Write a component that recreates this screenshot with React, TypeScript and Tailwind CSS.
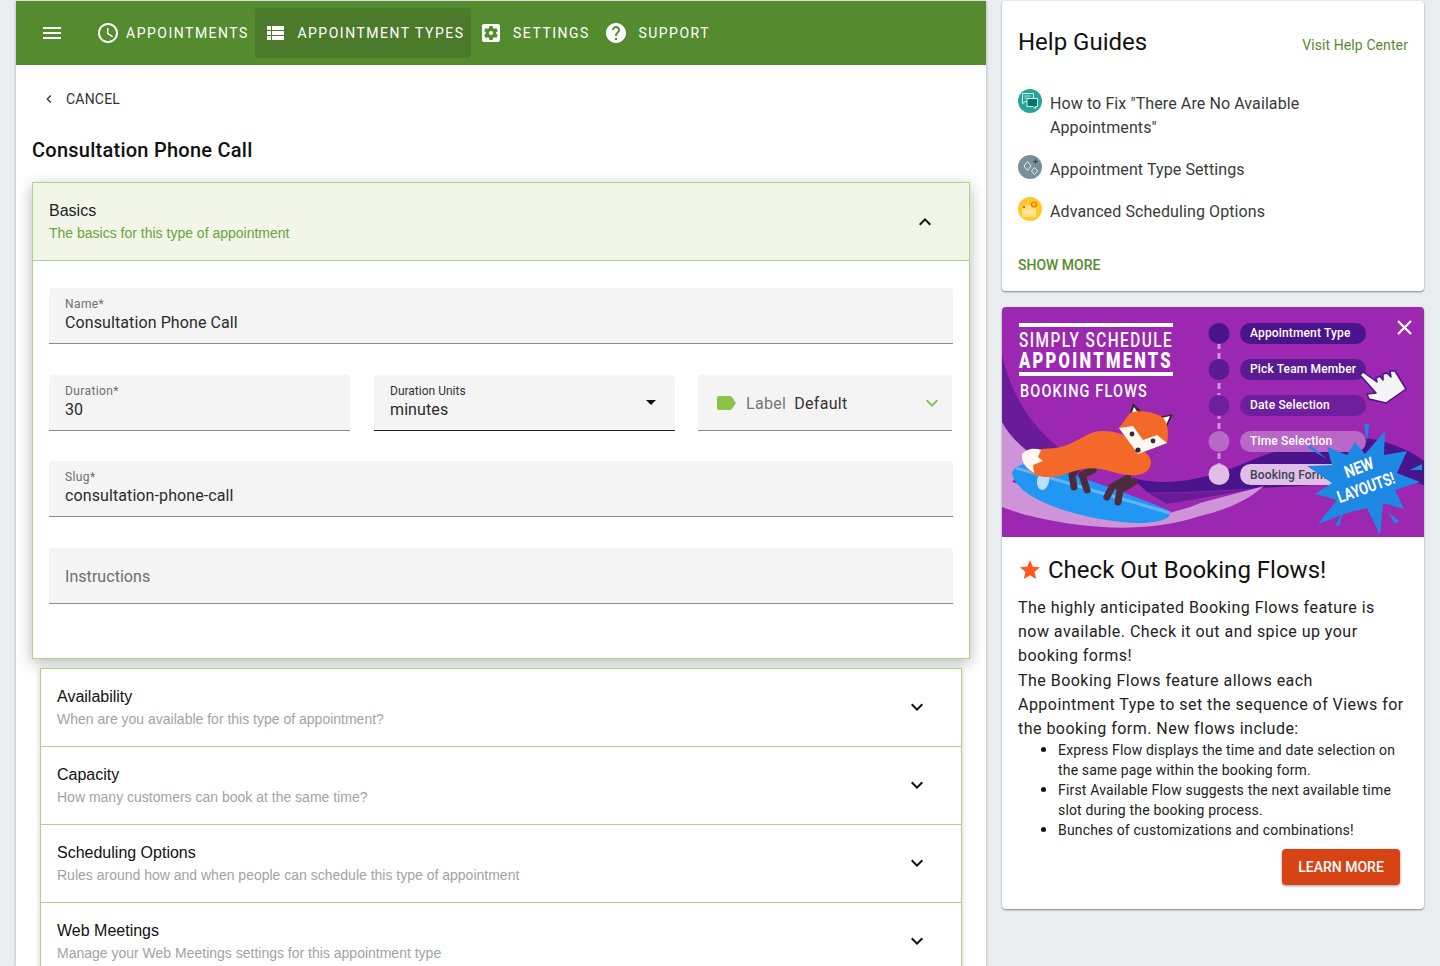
const ROBOTO = "font-['Roboto',sans-serif]";

const icons = {
	menu: "M3 18h18v-2H3v2zm0-5h18v-2H3v2zm0-7v2h18V6H3z",
	clock: "M11.99 2C6.47 2 2 6.48 2 12s4.47 10 9.99 10C17.52 22 22 17.52 22 12S17.52 2 11.99 2zM12 20c-4.42 0-8-3.58-8-8s3.58-8 8-8 8 3.58 8 8-3.58 8-8 8zm.5-13H11v6l5.25 3.15.75-1.23-4.5-2.67z",
	list: "M4 14h4v-4H4v4zm0 5h4v-4H4v4zM4 9h4V5H4v4zm5 5h12v-4H9v4zm0 5h12v-4H9v4zM9 5v4h12V5H9z",
	settings: "M12 10c-1.1 0-2 .9-2 2s.9 2 2 2 2-.9 2-2-.9-2-2-2zm7-7H5c-1.11 0-2 .9-2 2v14c0 1.1.89 2 2 2h14c1.11 0 2-.9 2-2V5c0-1.1-.89-2-2-2zm-1.75 9c0 .23-.02.46-.05.68l1.48 1.16c.13.11.17.3.08.45l-1.4 2.42c-.09.15-.27.21-.43.15l-1.74-.7c-.36.28-.76.51-1.18.69l-.26 1.85c-.03.17-.18.3-.35.3h-2.8c-.17 0-.32-.13-.35-.29l-.26-1.85c-.43-.18-.82-.41-1.18-.69l-1.74.7c-.16.06-.34 0-.43-.15l-1.4-2.42c-.09-.15-.05-.34.08-.45l1.48-1.16c-.03-.23-.05-.46-.05-.69 0-.23.02-.46.05-.68l-1.48-1.16c-.13-.11-.17-.3-.08-.45l1.4-2.42c.09-.15.27-.21.43-.15l1.74.7c.36-.28.76-.51 1.18-.69l.26-1.85c.03-.17.18-.3.35-.3h2.8c.17 0 .32.13.35.29l.26 1.85c.43.18.82.41 1.18.69l1.74-.7c.16-.06.34 0 .43.15l1.4 2.42c.09.15.05.34-.08.45l-1.48 1.16c.03.23.05.46.05.69z",
	help: "M12 2C6.48 2 2 6.48 2 12s4.48 10 10 10 10-4.48 10-10S17.52 2 12 2zm1 17h-2v-2h2v2zm2.07-7.75l-.9.92C13.45 12.9 13 13.5 13 15h-2v-.5c0-1.1.45-2.1 1.17-2.83l1.24-1.26c.37-.36.59-.86.59-1.41 0-1.1-.9-2-2-2s-2 .9-2 2H8c0-2.21 1.79-4 4-4s4 1.79 4 4c0 .88-.36 1.68-.93 2.25z",
	label: "M17.63 5.84C17.27 5.33 16.67 5 16 5L5 5.01C3.9 5.01 3 5.9 3 7v10c0 1.1.9 1.99 2 1.99L16 19c.67 0 1.27-.33 1.63-.84L22 12l-4.37-6.16z",
	star: "M12 17.27L18.18 21l-1.64-7.03L22 9.24l-7.19-.61L12 2 9.19 8.63 2 9.24l5.46 4.73L5.82 21z",
	down: "M16.59 8.59L12 13.17 7.41 8.59 6 10l6 6 6-6z",
	up: "M12 8l-6 6 1.41 1.41L12 10.83l4.59 4.58L18 14z",
	left: "M15.41 7.41L14 6l-6 6 6 6 1.41-1.41L10.83 12z",
};

function Icon({ d, className }: { d: string; className?: string }) {
	return (
		<svg viewBox="0 0 24 24" fill="currentColor" className={className}>
			<path d={d} />
		</svg>
	);
}

function NavButton({ icon, text, gap, active }: { icon: string; text: string; gap: string; active?: boolean }) {
	return (
		<div className={`flex h-[50px] items-center rounded px-2 ${gap} ${active ? "bg-[#4c7a2b]" : ""}`}>
			<Icon d={icon} className="h-6 w-6 shrink-0" />
			<span className="-mr-[1.5px] text-sm font-normal tracking-[1.5px] whitespace-nowrap">{text}</span>
		</div>
	);
}

function Field({ label, value, className }: { label: string; value: string; className?: string }) {
	return (
		<div className={`h-14 rounded-t border-b border-[#8a8a8a] bg-[#f4f4f4] px-4 pt-[9px] ${className ?? ""}`}>
			<div className="h-[15px] text-xs leading-[15px] tracking-[0.4px] text-[#6f6f6f]">{label}</div>
			<div className="-mt-px text-base leading-6 tracking-[0.1px] text-[#2b2b2b]">{value}</div>
		</div>
	);
}

function AccordionRow({ title, sub }: { title: string; sub: string }) {
	return (
		<div className="flex h-[78px] items-center justify-between border-b border-[#aed581] pr-[32px] pl-4">
			<div className="mb-[2px]">
				<div className="text-base leading-6 text-[#111]">{title}</div>
				<div className="text-sm leading-[20px] text-[#a3a3a3]">{sub}</div>
			</div>
			<Icon d={icons.down} className="mb-[2px] h-6 w-6 text-[#111]" />
		</div>
	);
}

function GuideIcon({ kind }: { kind: "chat" | "sparkle" | "calendar" }) {
	if (kind === "chat") {
		return (
			<svg viewBox="0 0 24 24" className="h-6 w-6 shrink-0">
				<circle cx="12" cy="12" r="12" fill="#26a69a" />
				<path d="M4.5 4.500h11v8h-8l-3 2z" fill="#26a69a" stroke="#e0f2f1" strokeWidth="1" />
				<path d="M9 9.5h10.5v8h-2v2l-2.500-2H9z" fill="#00796b" stroke="#e0f2f1" strokeWidth="1" />
				<path d="M6.500 7h6M6.500 9h2" stroke="#e0f2f1" strokeWidth="0.800" />
			</svg>
		);
	}
	if (kind === "sparkle") {
		return (
			<svg viewBox="0 0 24 24" className="h-6 w-6 shrink-0">
				<circle cx="12" cy="12" r="12" fill="#78909c" />
				<path d="M9.500 6.500l3.500 4.500-3.500 4.500-3.500-4.500z" fill="none" stroke="#eceff1" strokeWidth="1" />
				<path d="M16.500 12.500l3 3.500-3 3.500-3-3.500z" fill="none" stroke="#eceff1" strokeWidth="1" />
				<path d="M17.500 3.500l.8 2.200 2.200.8-2.200.8-.8 2.200-.8-2.200-2.200-.8 2.200-.8z" fill="#37474f" />
			</svg>
		);
	}
	return (
		<svg viewBox="0 0 24 24" className="h-6 w-6 shrink-0">
			<circle cx="12" cy="12" r="12" fill="#ffca28" />
			<rect x="4" y="8" width="14" height="12" rx="1" fill="#ffe082" />
			<circle cx="6" cy="10" r="1.300" fill="#f4511e" />
			<circle cx="16" cy="7.500" r="2.500" fill="#ffca28" stroke="#ef6c00" strokeWidth="1.200" />
			<path d="M4 15h14" stroke="#fff3c4" strokeWidth="0.800" />
		</svg>
	);
}

function Guide({ kind, children }: { kind: "chat" | "sparkle" | "calendar"; children: React.ReactNode }) {
	return (
		<div className="flex gap-2">
			<GuideIcon kind={kind} />
			<div className="pt-[3px] text-base leading-6 tracking-[0.1px] text-[#3a3a3a]">{children}</div>
		</div>
	);
}

function Bullet({ children }: { children: React.ReactNode }) {
	return (
		<li className="flex">
			<span className="mt-[7px] mr-3 h-[5px] w-[5px] shrink-0 rounded-full bg-[#111]" />
			<span>{children}</span>
		</li>
	);
}

const STEPS = [
	{ y: 16, base: 14, text: "Appointment Type", fill: "#4a148c", color: "#fff" },
	{ y: 52, base: 14, text: "Pick Team Member", fill: "#591a92", color: "#fff" },
	{ y: 88, base: 14, text: "Date Selection", fill: "#6f1f9e", color: "#fff" },
	{ y: 124, base: 14, text: "Time Selection", fill: "#ba68c8", color: "#fff" },
	{ y: 157, base: 15, text: "Booking Form", fill: "#e1bee7", color: "#37474f" },
];

function Banner() {
	return (
		<svg viewBox="0 0 422 230" className="block h-[230px] w-[422px]">
			<rect width="422" height="230" fill="#9c27b0" />
			{/* waves behind the fox */}
			<path d="M0 48C8 85 30 125 70 150L20 170 0 130z" fill="#6a1b9a" />
			<path d="M130 171C165 180 198 172 222 164C245 156 262 146 282 143C310 135 345 127 370 132C395 137 412 146 422 154V178C400 170 330 178 258 181C225 183 190 186 145 185z" fill="#4a148c" />
			<path d="M145 185C175 186 205 186 258 181L165 197z" fill="#6a1b9a" />
			<path d="M0 115C8 130 20 140 30 148L10 175 140 212C170 206 190 200 198 196L262 179C240 198 215 205 198 209C165 220 130 222 100 220C60 217 25 210 0 200z" fill="#ce93d8" />
			{/* board */}
			<path d="M10 166C13 157 28 154 42 159C80 170 135 190 166 203C173 210 160 216 135 216C85 214 15 195 10 166z" fill="#2196f3" />
			<path d="M14 161L168 206" stroke="#64b5f6" strokeWidth="3" />
			<ellipse cx="41" cy="174" rx="6" ry="9" fill="#bbdefb" transform="rotate(10 41 174)" />
			{/* fox */}
			<g fill="none" stroke="#4a2c3a" strokeWidth="7" strokeLinecap="round" strokeLinejoin="round">
				<path d="M76 160L70 168L72 180" />
				<path d="M91 163L80 168L85 183" />
				<path d="M126 171L110 180L105 190" />
				<path d="M132 175L118 183L116 195" />
			</g>
			<path d="M21 146C30 140 50 144 65 138C80 132 88 124 100 124C115 124 125 128 132 136C144 146 152 150 148 160C143 170 128 170 111 165C100 162 90 160 81 162C65 165 58 171 45 170C30 170 19 160 21 146z" fill="#f4682a" />
			<path d="M20 147C26 141 32 141 39 143L36 150L41 154L31 158L32 166C24 161 19 155 20 147z" fill="#fff8ef" />
			<path d="M126 111L131 96L141 106z" fill="#3a2632" />
			<path d="M129 108L132 100L137 107z" fill="#fff" />
			<path d="M157 110L171 107L164 122z" fill="#3a2632" />
			<path d="M160 111L168 109L164 118z" fill="#fff" />
			<path d="M128 106C135 103 150 104 160 110C166 115 167 125 165 136L136 147L117 121z" fill="#f4682a" />
			<path d="M117 121L131 119L141 133L155 128L165 136L136 147z" fill="#fff8ef" />
			<circle cx="130" cy="127" r="2.400" fill="#3a2632" />
			<circle cx="151" cy="134" r="2.400" fill="#3a2632" />
			<circle cx="136" cy="143" r="2.600" fill="#3a2632" />
			{/* heading */}
			<rect x="17" y="16" width="154" height="4" fill="#fff" />
			<rect x="17" y="65" width="154" height="4" fill="#fff" />
			<g fill="#fff" fontFamily="Roboto, sans-serif">
				<text x="17" y="40" fontSize="21" letterSpacing="2" textLength="154" lengthAdjust="spacingAndGlyphs" fontWeight="500">SIMPLY SCHEDULE</text>
				<text x="17" y="61" fontSize="22" letterSpacing="3" textLength="154" lengthAdjust="spacingAndGlyphs" fontWeight="900">APPOINTMENTS</text>
				<text x="18" y="90" fontSize="18.500" letterSpacing="1.500" textLength="128" lengthAdjust="spacingAndGlyphs" fontWeight="500">BOOKING FLOWS</text>
			</g>
			{/* flow steps */}
			<path d="M217 36V160" stroke="#ce93d8" strokeWidth="3" strokeDasharray="6 4" />
			{STEPS.map((s) => (
				<g key={s.text}>
					<circle cx="217" cy={s.y + 10.500} r="10.500" fill={s.fill} />
					<rect x="238" y={s.y} width="126" height="21" rx="10.500" fill={s.fill} />
					<text x="248" y={s.y + s.base} fontSize="12" fontWeight="500" letterSpacing="0.150" fontFamily="Roboto, sans-serif" fill={s.color}>
						{s.text}
					</text>
				</g>
			))}
			{/* hand */}
			<path d="M358 68L361 65L375 75L374 71L378 69L381 73L381 67L385 66L389 70L388 64L393 64L404 82L384 96L367 92L365 87L374 86z" fill="#f5f5f5" stroke="#4a148c" strokeWidth="1.500" strokeLinejoin="round" />
			{/* close */}
			<path d="M396 14L409 27M409 14L396 27" stroke="#fff" strokeWidth="2.200" />
			{/* burst */}
			<g fill="#1e88e5">
				<polygon points="353,135 363,147 383,124 382,148 405,144 395,166 418,175 393,183 402,202 381,196 378,228 365,201 348,205 316,217 335,193 313,187 330,176 305,159 330,158 325,140 345,148" />
				<polygon points="362,117 367,117 365,135" />
				<polygon points="306,141 308,138 325,152" />
				<polygon points="408,163 420,157 420,163" />
				<polygon points="333,218 341,206 337,219" />
				<polygon points="386,205 397,214 393,217" />
			</g>
			<g fill="#fff" fontFamily="Roboto, sans-serif" fontWeight="700" textAnchor="middle">
				<text x="359" y="166" fontSize="17" transform="rotate(-20 359 166)" textLength="30" lengthAdjust="spacingAndGlyphs">NEW</text>
				<text x="366" y="186" fontSize="17" transform="rotate(-20 366 186)" textLength="60" lengthAdjust="spacingAndGlyphs">LAYOUTS!</text>
			</g>
		</svg>
	);
}

export default function App() {
	return (
		<div className={`flex h-[966px] gap-4 overflow-hidden bg-[#e9edf0] pt-px pl-4 ${ROBOTO}`}>
			<main className="w-[970px] shrink-0 bg-white shadow-[0_1px_3px_rgba(0,0,0,0.3)]">
				<nav className="flex h-16 items-center bg-[#558b2f] pl-6 text-white">
					<Icon d={icons.menu} className="h-6 w-6" />
					<div className="ml-6 flex items-center">
						<NavButton icon={icons.clock} text="APPOINTMENTS" gap="gap-[6px]" />
						<NavButton icon={icons.list} text="APPOINTMENT TYPES" gap="gap-[10px]" active />
						<NavButton icon={icons.settings} text="SETTINGS" gap="gap-[10px]" />
						<NavButton icon={icons.help} text="SUPPORT" gap="gap-[10px]" />
					</div>
				</nav>

				<div className="px-4">
					<div className="flex h-[68px] items-center pl-[9px] text-sm text-[#333]">
						<Icon d={icons.left} className="h-4 w-4 text-[#333]" />
						<span className="ml-[9px] tracking-[0.2px]">CANCEL</span>
					</div>
					<h1 className="mt-[3px] h-[28px] text-xl leading-[28px] font-medium tracking-[0.25px] text-[#111]">Consultation Phone Call</h1>

					<section className="mt-[18px] h-[477px] border border-[#aed581] shadow-[0_4px_14px_rgba(0,0,0,0.28)] font-['Liberation_Sans',sans-serif]">
						<div className="flex h-[78px] items-center justify-between border-b border-[#aed581] bg-[#f1f6e9] pr-[32px] pl-4">
							<div className="mb-[2px]">
								<div className="text-base leading-6 text-[#222]">Basics</div>
								<div className="text-sm leading-[20px] text-[#6aa43a]">The basics for this type of appointment</div>
							</div>
							<Icon d={icons.up} className="h-6 w-6 text-[#111]" />
						</div>
						<div className={`px-4 pt-[27px] ${ROBOTO}`}>
							<Field label="Name*" value="Consultation Phone Call" />
							<div className="mt-[31px] flex">
								<Field label="Duration*" value="30" className="w-[301px]" />
								<div className="ml-[24px] flex h-14 w-[301px] items-center justify-between rounded-t border-b border-[#222] bg-[#f4f4f4] pr-[19px] pl-4">
									<div>
										<div className="h-[15px] text-xs leading-[15px] text-[#333]">Duration Units</div>
										<div className="-mt-px text-base leading-6 tracking-[0.1px] text-[#2b2b2b]">minutes</div>
									</div>
									<div className="h-0 w-0 border-x-[5px] border-t-[5px] border-x-transparent border-t-[#111]" />
								</div>
								<div className="ml-[23px] flex h-14 w-[254px] items-center rounded-t border-b border-[#8a8a8a] bg-[#f4f4f4] pr-2 pl-[17px]">
									<Icon d={icons.label} className="h-[24px] w-[24px] -translate-x-[1px] text-[#8bc34a]" />
									<span className="ml-[7px] pt-[2px] text-base tracking-[0.3px] text-[#777]">Label</span>
									<span className="ml-2 pt-[2px] text-base tracking-[0.3px] text-[#333]">Default</span>
									<Icon d={icons.down} className="ml-auto h-6 w-6 text-[#8bc34a]" />
								</div>
							</div>
							<Field label="Slug*" value="consultation-phone-call" className="mt-[30px]" />
							<div className="mt-[31px] flex h-14 items-center rounded-t border-b border-[#8a8a8a] bg-[#f4f4f4] px-4 pt-[2px] text-base tracking-[0.05px] text-[#6f6f6f]">
								Instructions
							</div>
						</div>
					</section>

					<div className="mx-2 mt-[9px] border-x border-t border-[#aed581] bg-white font-['Liberation_Sans',sans-serif] shadow-[0_2px_6px_rgba(0,0,0,0.2)]">
						<AccordionRow title="Availability" sub="When are you available for this type of appointment?" />
						<AccordionRow title="Capacity" sub="How many customers can book at the same time?" />
						<AccordionRow title="Scheduling Options" sub="Rules around how and when people can schedule this type of appointment" />
						<AccordionRow title="Web Meetings" sub="Manage your Web Meetings settings for this appointment type" />
					</div>
				</div>
			</main>

			<aside className="w-[422px] shrink-0">
				<div className="h-[290px] rounded bg-white px-4 shadow-[0_1px_2px_rgba(0,0,0,0.45)]">
					<div className="flex h-[88px] items-start justify-between pt-[23px]">
						<h2 className="text-2xl leading-9 text-[#111]">Help Guides</h2>
						<a className="mt-[11px] text-sm leading-5 tracking-[0.1px] text-[#558b2f]">Visit Help Center</a>
					</div>
					<div className="flex flex-col gap-[15px]">
						<Guide kind="chat">
							How to Fix "There Are No Available
							<br />
							Appointments"
						</Guide>
						<Guide kind="sparkle">Appointment Type Settings</Guide>
						<Guide kind="calendar">Advanced Scheduling Options</Guide>
					</div>
					<div className="mt-[31px] text-sm leading-5 font-medium text-[#558b2f]">SHOW MORE</div>
				</div>

				<div className="mt-4 h-[602px] overflow-hidden rounded bg-white shadow-[0_1px_2px_rgba(0,0,0,0.45)]">
					<Banner />
					<div className="px-4">
						<div className="flex h-[40px] items-center pt-[26px] pb-0">
							<Icon d={icons.star} className="h-6 w-6 shrink-0 text-[#ff5722]" />
							<h3 className="ml-[6px] text-2xl leading-8 text-[#111]">Check Out Booking Flows!</h3>
						</div>
						<p className="mt-[19px] text-base leading-6 tracking-[0.47px] text-[#222]">
							The highly anticipated Booking Flows feature is now available. Check it out and spice up your booking forms!
						</p>
						<p className="mt-px text-base leading-6 tracking-[0.47px] text-[#222]">
							The Booking Flows feature allows each Appointment Type to set the sequence of Views for the booking form. New flows include:
						</p>
						<ul className="-mt-px pl-[23px] text-sm leading-5 tracking-[0.17px] text-[#222]">
							<Bullet>Express Flow displays the time and date selection on the same page within the booking form.</Bullet>
							<Bullet>First Available Flow suggests the next available time slot during the booking process.</Bullet>
							<Bullet>Bunches of customizations and combinations!</Bullet>
						</ul>
						<div className="mt-[9px] flex justify-end pr-2">
							<button className="h-9 w-[118px] rounded bg-[#d84315] text-sm font-medium text-white shadow-[0_1px_3px_rgba(0,0,0,0.4)]">LEARN MORE</button>
						</div>
					</div>
				</div>
			</aside>
		</div>
	);
}
